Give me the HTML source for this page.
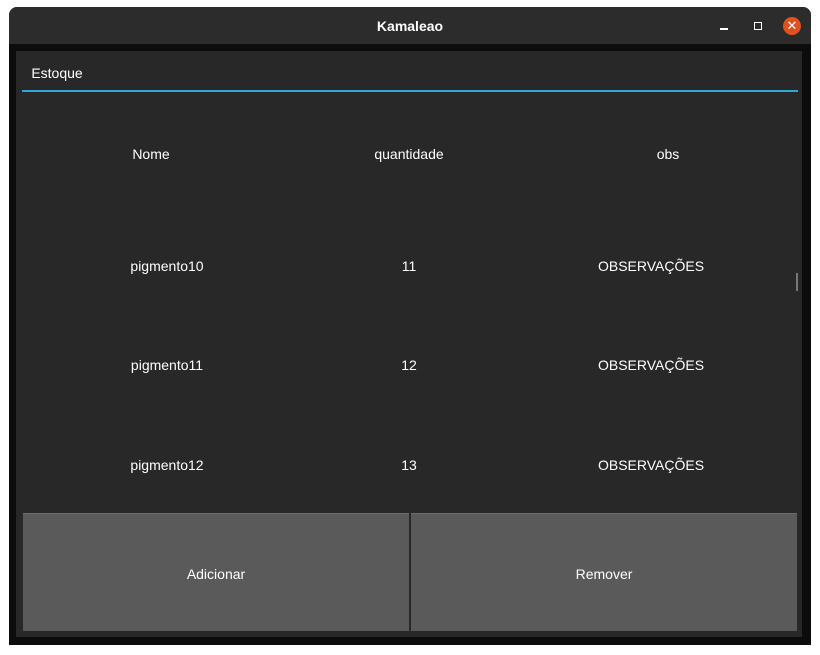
<!DOCTYPE html>
<html><head><style>
body{margin:0;width:820px;height:655px;background:#fff;position:relative;overflow:hidden;font-family:"Liberation Sans",sans-serif;}
.win{position:absolute;left:9px;top:7px;width:802px;height:638px;background:#0c0c0c;border-radius:8px 8px 0 0;overflow:hidden}
.tb{position:absolute;left:0;top:0;width:802px;height:37px;background:#2c2c2c;color:#fff;font-weight:bold;font-size:14px;text-align:center;line-height:38px}
.panel{position:absolute;left:16px;top:51px;width:786px;height:586px;background:#282828;}
.t{position:absolute;color:#fff;font-size:14px;transform:translateX(-50%);white-space:nowrap}
.btn{position:absolute;top:513px;height:118px;background:#5a5a5a;color:#fff;font-size:14px;text-align:center;line-height:120px;border-top:1px solid #6a6a6a;box-sizing:border-box}
</style></head><body>
<div class="win"><div class="tb">Kamaleao</div>
<div style="position:absolute;left:711px;top:21px;width:8px;height:1.5px;background:#fff"></div>
<div style="position:absolute;left:745px;top:15px;width:6px;height:6px;border:1.5px solid #fff"></div>
<div style="position:absolute;left:774px;top:10px;width:18px;height:18px;border-radius:50%;background:#e2501f;color:#fff;font-size:13px;text-align:center;line-height:18px">✕</div>
</div>
<div class="panel"></div>
<div class="t" style="left:57px;top:65px">Estoque</div>
<div style="position:absolute;left:22px;top:90px;width:776px;height:2px;background:#2fa7d6"></div>
<div class="t" style="left:151px;top:146px">Nome</div>
<div class="t" style="left:409px;top:146px">quantidade</div>
<div class="t" style="left:668px;top:146px">obs</div>
<div class="t" style="left:167px;top:258px">pigmento10</div><div class="t" style="left:409px;top:258px">11</div><div class="t" style="left:651px;top:258px">OBSERVAÇÕES</div>
<div class="t" style="left:167px;top:357px">pigmento11</div><div class="t" style="left:409px;top:357px">12</div><div class="t" style="left:651px;top:357px">OBSERVAÇÕES</div>
<div class="t" style="left:167px;top:457px">pigmento12</div><div class="t" style="left:409px;top:457px">13</div><div class="t" style="left:651px;top:457px">OBSERVAÇÕES</div>
<div style="position:absolute;left:796px;top:273px;width:2px;height:18px;background:#777"></div>
<div class="btn" style="left:23px;width:386px">Adicionar</div>
<div class="btn" style="left:411px;width:386px">Remover</div>
</body></html>
